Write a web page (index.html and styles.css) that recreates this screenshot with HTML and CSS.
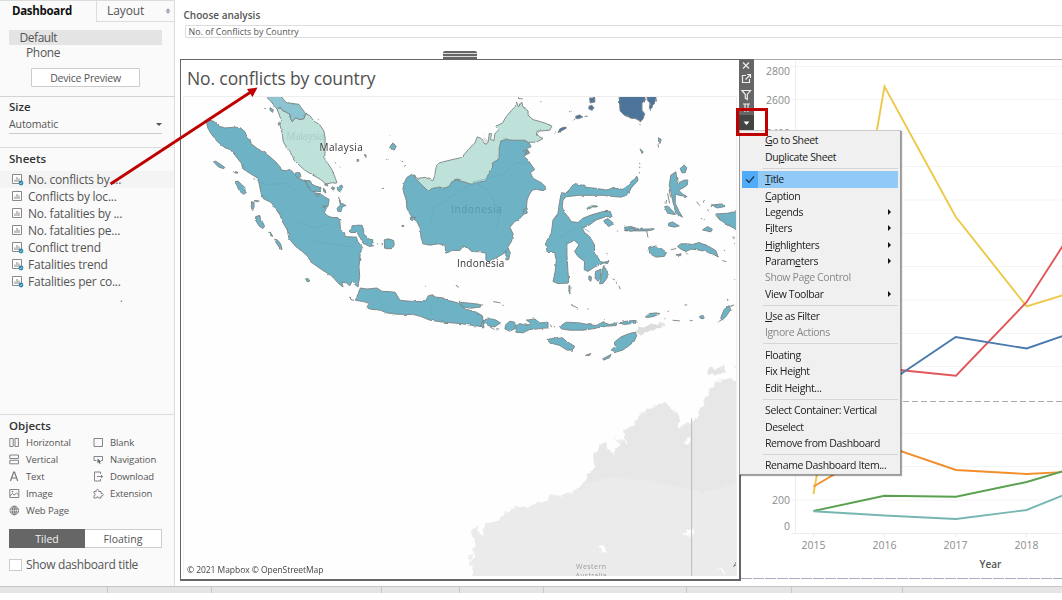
FILE: index.html
```html
<!DOCTYPE html>
<html lang="en">
<head>
<meta charset="utf-8">
<title>Dashboard</title>
<link rel="stylesheet" href="styles.css">
</head>
<body>
<svg class="defs" width="0" height="0">
  <symbol id="sheet" viewBox="0 0 12 12"><path d="M.5.5h9v9h-9z" fill="#fff" stroke="#888"/><path d="M3 8V5.500M5 8V3M7 8V4.500" stroke="#999" stroke-width="1.200"/></symbol>
  <symbol id="linked" viewBox="0 0 12 12"><use href="#sheet" width="12" height="12"/><circle cx="9" cy="9" r="2.400" fill="#2f87ad"/><path d="M7.800 9l.9.9 1.500-1.800" stroke="#d8eef7" stroke-width=".7" fill="none"/></symbol>
</svg>
<div class="app">
  <aside class="side">
    <div class="tabs"><div class="tab on">Dashboard</div><div class="tab lay">Layout<svg class="pin" width="4" height="6"><ellipse cx="2" cy="3" rx="1.200" ry="2" fill="#ccd" stroke="#778" stroke-width=".8"/></svg></div></div>
    <section class="device">
      <div class="default">Default</div>
      <div class="phone">Phone</div>
      <div class="preview">Device Preview</div>
    </section>
    <section class="size">
      <h3>Size</h3>
      <div class="select"><span>Automatic</span><i></i></div>
    </section>
    <section class="sheets">
      <h3>Sheets</h3>
      <ul>
        <li class="hot"><svg><use href="#linked"/></svg>No. conflicts by ...</li>
        <li><svg><use href="#sheet"/></svg>Conflicts by loc...</li>
        <li><svg><use href="#sheet"/></svg>No. fatalities by ...</li>
        <li><svg><use href="#sheet"/></svg>No. fatalities pe...</li>
        <li><svg><use href="#linked"/></svg>Conflict trend</li>
        <li><svg><use href="#linked"/></svg>Fatalities trend</li>
        <li><svg><use href="#linked"/></svg>Fatalities per co...</li>
      </ul>
      <div class="dot">.</div>
    </section>
    <section class="objects">
      <h3>Objects</h3>
      <div class="grid">
        <div><svg viewBox="0 0 11 11"><path d="M.8 1.500h3.400v8H.8zM6 1.500h3.400v8H6z"/></svg>Horizontal</div>
        <div><svg viewBox="0 0 11 11"><path d="M1 1.500h8.500v8H1z"/></svg>Blank</div>
        <div><svg viewBox="0 0 11 11"><path d="M.8 1h8.700v3.500H.8zM.8 6.300h8.700v3.500H.8z"/></svg>Vertical</div>
        <div><svg viewBox="0 0 11 11"><path d="M3.500 6.500H1v-4h8.500v4H8"/><path d="M4.500 4.500v5l1.300-1.200 1 2 .8-.5-.8-1.700 1.500-.4z" fill="#666" stroke="none"/></svg>Navigation</div>
        <div><svg viewBox="0 0 11 11"><path d="M1.500 10 4.700 1h.8L8.700 10M2.800 7h4.600" stroke-width="1.200"/></svg>Text</div>
        <div><svg viewBox="0 0 11 11"><path d="M7.500 3V1H1.500v9h6V8M4 5.500h5.500M8 4l1.800 1.500L8 7"/></svg>Download</div>
        <div><svg viewBox="0 0 11 11"><path d="M.8 1.500h9v8h-9zM1 8l2.300-2.500 1.700 1.500 2.500-2L9.700 7"/><circle cx="3.500" cy="3.700" r=".5"/></svg>Image</div>
        <div><svg viewBox="0 0 11 11"><path d="M1 3.500h2.300C2.300 1 6.300.5 5.700 3.500H8v2c3-.7 3 3 0 2.500V10H5.500c0-1.800-2-1.800-2 0H1V7.500c2 0 2-2 0-2z"/></svg>Extension</div>
        <div><svg viewBox="0 0 11 11"><circle cx="5.300" cy="5.500" r="4.300"/><ellipse cx="5.300" cy="5.500" rx="2" ry="4.300"/><path d="M5.300 1.200v8.600M1.300 4h8M1.300 7h8"/></svg>Web Page</div>
      </div>
      <div class="seg"><b>Tiled</b><span>Floating</span></div>
      <div class="check"><i></i>Show dashboard title</div>
    </section>
  </aside>
  <main class="canvas">
    <div class="param"><label>Choose analysis</label><div class="field">No. of Conflicts by Country</div></div>
    <div class="row">
      <div class="mapcard">
        <div class="handle"></div>
        <h1>No. conflicts by country</h1>
        <svg class="map" width="554" height="480" viewBox="183 97 554 480">
          <defs>
            <filter id="rough" filterUnits="userSpaceOnUse" x="183" y="90" width="560" height="490"><feTurbulence type="fractalNoise" baseFrequency=".22" numOctaves="1" seed="4"/><feDisplacementMap in="SourceGraphic" scale="2.600" xChannelSelector="R" yChannelSelector="G"/></filter>
            <filter id="rough2" filterUnits="userSpaceOnUse" x="183" y="90" width="560" height="490"><feTurbulence type="fractalNoise" baseFrequency=".2" numOctaves="2" seed="9"/><feDisplacementMap in="SourceGraphic" scale="7" xChannelSelector="R" yChannelSelector="G"/></filter>
          </defs>
          <rect x="183" y="97" width="554" height="480" fill="#fefefe"/>
          <g filter="url(#rough2)">
            <g transform="translate(440 350) scale(.33333)" fill="#ebebeb">
              <path d="M95 690L98 660 88 650 85 625 103 600 103 570 95 560 100 540 112 525 115 550 125 560 135 535 145 522 180 510 195 492 230 472 270 474 290 460 320 455 330 440 360 440 410 425 430 405 445 378 470 352 462 335 462 315 495 280 505 300 520 318 540 285 525 265 560 280 555 245 580 228 600 200 630 178 660 165 675 160 700 180 720 200 718 235 740 220 770 215 800 210 775 195 800 150 812 120 835 95 850 90 910 92 910 690z"/>
              <path d="M400 440L410 425 430 405 445 378 470 352 462 335 462 315 495 280 505 300 520 318 540 285 560 280 555 245 580 228 600 200 630 178 675 160 700 180 720 200 718 235 770 215 800 150 812 120 850 90 910 92 910 400 790 430 640 395 520 385 440 400z" fill="#e7e7e7"/>
              <path d="M805 66l10-16 15 8 25-8 8 12-20 14-38-2zM880 48l30 0 0 16z" fill="#e4e4e4"/>
              <path d="M740 265l12 0-2 22-12-2zM728 555l40-20-2 20-25 8zM480 592l16 0 2 14-10 8zM828 655l40 18-20-2zM88 645l12-40 6 20z" fill="#fff"/>
            </g>
            <path d="M637 330l11-4 18-2-8 5-10 3-8 4z" fill="#ddd" stroke="#ccc" stroke-width=".4"/>
            <path d="M481 137l3 3 2-5 2 7 2-7v6l-4 3z" fill="#ddd"/>
          </g>
          <path d="M692.500 419v158" stroke="#bbb"/>
          <g class="land" filter="url(#rough)">
            <g transform="translate(180 50) scale(.33333)">
              <path class="my" d="M290 178L298 170 305 180 318 186 328 192 330 205 335 214 345 202 358 208 370 205 375 190 388 196 400 212 418 224 430 242 434 262 433 330 442 340 455 360 465 385 470 400 455 398 436 402 420 388 395 374 372 360 340 330 336 318 320 295 308 275 305 250 298 225 300 205z"/>
              <path class="th" d="M245 130H300L305 143 318 157 355 162 362 172 375 190 370 205 358 208 345 202 335 214 330 205 328 192 318 186 305 180 298 170 290 178 280 165 268 150z"/>
              <path d="M76 210L82 208 100 214 115 228 133 233 160 231 178 232 192 244 198 258 208 268 210 280 230 295 250 306 268 320 285 335 298 350 303 360 318 362 325 358 333 362 343 374 355 385 372 392 378 402 388 418 402 428 420 432 432 440 446 448 444 462 436 478 432 488 440 497 452 502 472 503 478 510 480 540 492 548 494 560 528 562 532 575 546 592 540 610 536 650 538 680 533 712 525 706 515 696 508 708 498 700 484 698 488 712 475 702 462 688 450 675 430 664 410 650 390 636 382 620 365 605 345 590 325 566 320 540 305 515 298 495 285 477 272 458 248 446 240 425 232 385 208 370 186 356 182 340 165 318 148 298 133 293 110 275 90 250 80 232z"/>
              <path d="M98 335l6-2 14 9 14 10-4 4-16-6zM162 395l10-2 10 10 10 9 2 18-6 3-13-11-7-17zM225 500l10-3 10 18 7 15-6 6-11-8-11-18zM264 547l6 1 6 12-5-2zM282 568l8 2 10 12 4 18-6-4-12-18zM375 688l7-2 6 8-8 2zM212 455l8 2v13l-4 12-4-7zM220 452l14 0-4 4zM158 365l10 0 4 4-8 0zM218 386l5 2M250 174l6 0M268 172l10 6-2 8-8-6zM292 218l6 4-2 6zM412 208l4 1"/>
              <path d="M506 543L514 537 515 528 528 526 545 526 550 540 550 552 562 566 578 570 574 584 580 588 568 590 548 580 540 565 530 548 510 548zM612 570L625 567 640 572 642 585 636 596 622 597 613 595zM590 582l4 0M603 580l4 2v4"/>
              <path d="M345 368l13 0 3 12-11 4-6-8zM372 390l18 2 3 10 12 6 13 4 2 13-12-1-13 1-10-10zM405 432l14-2-8 12zM428 415l6 4 2 10-6-4zM470 412l14-7 3 9-9 11-6-4zM455 410l8 4-4 6-6-4zM432 402l8 0 2 6zM475 445l10 15 12 7-12 5-3 13-10-1-2-9 10-10zM425 468l12 0-8 6zM630 288l8-10 10 10-6 12-8-2zM530 328l5 0 0 5-5 0zM552 314l5 0 0 8-4-4zM605 415l6 0M618 328l3 0M665 330l4 4M674 348l3 1M627 253l3 2M463 337l4 2M478 350l2 2M665 526l6 2-4 4zM735 710l2 0M828 708l6 2-2 3z"/>
              <path d="M540 715L560 718 590 715 605 725 630 726 645 728 655 745 660 752 690 755 735 756 745 738 758 735 765 742 790 745 800 752 820 756 838 762 855 778 890 788 908 800 912 832 880 828 840 822 790 818 750 812 720 800 700 795 650 794 620 790 600 782 565 778 560 770 568 762 550 756 525 752 530 740zM508 742l6 6 6 4-8-2zM838 758l25 2 35 4 4 8-30 4-25-4z"/>
            </g>
            <g transform="translate(400 80) scale(.33333)">
              <path class="my" d="M36 282L52 295 75 292 98 302 103 290 108 262 118 248 150 240 185 232 205 208 225 188 232 170 245 175 258 193 265 185 268 160 275 160 272 178 282 182 285 160 298 148 288 138 308 128 320 108 335 90 345 80 350 65 356 80 366 65 370 80 385 92 385 105 400 118 425 125 440 130 457 138 450 150 412 153 410 165 430 175 410 186 390 186 340 220 280 330 80 345z"/>
              <path d="M36 282L48 297 65 315 82 331 98 325 115 321 135 324 148 318 155 305 170 300 190 305 215 313 240 306 258 302 262 290 270 272 278 262 278 248 292 240 298 232 298 205 303 182 320 178 340 180 375 180 388 188 394 200 380 205 390 218 372 228 385 240 395 255 405 268 392 278 400 295 425 308 442 325 430 332 410 328 398 330 388 345 382 360 380 385 375 400 358 418 345 425 330 442 340 462 335 485 325 500 322 515 300 528 268 545 258 540 258 520 240 516 215 515 205 505 190 498 180 512 160 512 137 520 135 496 115 492 90 496 68 492 62 470 60 445 50 425 38 415 28 400 20 385 18 360 8 330 12 308 20 292z"/>
              <path d="M318 512l7-7 7 15-6 20-8 0zM370 212l14-2-6 12zM30 412l16 0-6 10-8-2zM370 390l12-6 0 16-10 2zM5 240l4 2M12 258l4 0M7 436l5 1M355 54l14 2M422 64l3 0"/>
            </g>
            <g transform="translate(560 50) scale(.33333)">
              <path class="ph" d="M185 130H255L258 150 248 158 248 180 256 190 252 205 243 215 232 205 215 204 195 195 182 182 180 158zM262 130H295L290 155 280 165 275 182 270 172 272 158 264 150zM90 143l16 0 0 12-14 3zM88 168l8-3 8 5-6 10-10-4zM48 198l12-4 10 6-12 5-8 0zM0 236l18-8 2 6-15 8-10 6zM30 186l6-4M42 210l6-6M75 198l10 0M240 222l4 2M-15 250l4-4"/>
              <path d="M5 428L18 430 30 418 40 405 50 400 60 405 75 405 80 412 110 415 140 420 160 414 190 418 205 408 215 395 228 385 232 378 236 392 225 402 215 415 208 428 195 442 165 440 130 436 100 436 60 436 40 438 20 440 10 450 8 470 12 485 25 500 35 515 55 518 70 505 95 495 130 485 152 484 158 500 140 500 110 510 90 525 68 535 75 548 90 560 105 585 105 610 120 630 132 640 105 652 85 665 74 660 75 635 55 620 45 605 58 585 45 572 22 582 22 615 25 665 28 700-5 702-20 695-14 670-10 630-15 608-37 608-43 580-25 550-20 510-5 490 0 455z"/>
              <path d="M335 375L350 365 352 380 355 400 375 390 386 390 384 405 370 415 358 420 370 432 384 440 360 436 348 432 348 460 360 485 370 502 350 490 342 460 336 430 330 405zM363 355L375 345 383 352 378 368 368 368zM298 262l8 6-4 12-4-5zM296 282l2 10M242 296l10 9-4 5zM316 470l9-2 10 10 10 10 3 6-23-4zM328 520l12-4 20 12-15 4-17-4zM430 540l15-10 15 8-5 8zM545 482L505 490 470 492 485 510 500 522 545 545zM455 465l35-3 6 8-21 4zM195 532l20-2 25 8 45-1-5 3-18 3-32 0-32-1zM262 543l4 20M133 512l12-6 17 14-12 10-10-5zM82 475l12-7 14-1 4 4-12 0-16 8zM325 430l6 30M330 422l4 20M322 450l-2 12M240 338l2 4M241 350l0 4M240 366l1 4M412 455l10 12M435 450l2 8M425 509l12 0M525 560l0 8M172 542l3 3M445 478l4 6M470 496l16 18"/>
            </g>
            <g transform="translate(480 230) scale(.33333)">
              <path d="M348 125l17-7-3 27-7 10-8-10zM372 108l12 17-1 20-13 17-10 0 5-22zM370 98l18-4-4 8zM328 138l8 4-2 13-6-5zM268 168l3 0 0 25-3-4zM400 148l6 2M410 156l4 6M418 168l5 10M380 70l4 2"/>
              <path d="M508 55L530 48 545 55 562 68 555 80 530 82 512 72zM595 50L605 42 625 42 640 44 660 38 685 48 710 62 718 82 700 72 680 65 655 60 635 58 620 65 605 58zM590 75l16-3-2 6zM575 60l16-4M620 68l6 6M435 2l20-8 20 4-18 6zM730 92l12 4M735 60l2 4M767 40l0 3M767 148l0 2"/>
              <path d="M-10 252l15 5 4 14-8 20M10 270L30 268 45 270 62 280 45 292 30 290 12 280zM78 285L90 275 105 278 105 298 90 305 75 298zM108 290L120 282 140 288 155 282 140 272 165 268 180 280 205 278 205 295 175 298 150 300 130 310 108 308zM240 290L260 278 300 280 325 285 350 288 370 278 390 285 415 280 410 288 380 290 340 298 310 302 270 302 245 298zM420 280L440 275 470 272 470 280 435 285zM202 330L245 322 260 335 285 350 280 362 262 362 240 348 210 340zM370 388L395 375 390 385 372 392zM318 378l16-6-4 6zM395 362L408 350 405 338 425 322 450 312 468 308 472 318 465 335 450 348 430 362 410 368zM498 262L510 252 530 250 542 252 525 260 505 264zM725 265L735 240 750 228 755 240 740 262 728 272zM752 232l14-6M716 278l10-6M745 208l2 6M580 272l22 2M632 273l6 1M660 262l8-4 8 6-4 4zM616 226l8 0M565 246l4-2M556 267l3 1M275 224l20 12M323 238l4 0M40 216l14 2 8 2M68 226l4 2M0 225l10 2M212 285l4 8M222 290l6 5M30 292l14 8M50 298l8 0M378 268l-6 10"/>
            </g>
          </g>
          <path class="prov" d="M256 180l10 5 18-2 12 8M298 222l16 6 14-4M312 241l22 4 18 2M430 226l4-18 40-26 14 8 12 22-4 18M474 182l30-8 12-12 12 2M560 238l20-12 10 6M380 300l2 10M430 306l2 10"/>
          <g class="ghost"><text x="286" y="139.500" textLength="38" fill="#a6cfc5">Malaysia</text><text x="451" y="213.500" textLength="51" fill="#4f9bad">Indonesia</text></g>
          <g class="names"><text x="319" y="150.500" textLength="43.500">Malaysia</text><text x="457" y="267" textLength="47.500">Indonesia</text></g>
          <g class="west"><text x="576.500" y="570.500" textLength="30">Western</text><text x="576" y="579" textLength="31">Australia</text><text x="734.500" y="568" font-style="italic" fill="#555">A</text></g>
        </svg>
        <div class="credit">© 2021 Mapbox © OpenStreetMap</div>
        <div class="tools">
          <svg width="15" height="71" viewBox="0 0 15 71" fill="none" stroke="#eee" stroke-width="1.200"><path d="M4 3.500l6 6M10 3.500l-6 6M7 16.500H3.500v7h7V20M6.500 20.500l4.500-4.500M8 15.500h3.500V19M3 31.500h8.500L8.300 35.500v5l-2-1.300v-3.700zM4 45h7M6 45v8M9 45v8"/><path d="M0 56h15v15H0z" fill="#444" stroke="none"/><path d="M4.500 62.500h6L7.500 66z" fill="#fff" stroke="none"/></svg>
        </div>
      </div>
      <svg class="chart" width="321" height="522" viewBox="741 59 321 522">
        <path d="M741 59.500h321" stroke="#aaa"/>
        <path d="M792 66.500h270M792 99.500h270M792 133.500h270M792 166.500h270M792 200h270M792 233.500h270M792 266.500h270M792 300h270M792 333.500h270M792 366.500h270M792 433.500h270M792 466.500h270M792 500h270" stroke="#f4f4f4"/>
        <path d="M795.500 61v472M792 533.500h270M813.500 533v4M884.500 533v4M955.500 533v4M1026.500 533v4" stroke="#ededed"/>
        <path d="M741 401.500h321" stroke="#aaa" stroke-width="1.200" stroke-dasharray="6 3"/>
        <path d="M741 578.500h321" stroke="#a6adbf" stroke-dasharray="11 1"/>
        <g fill="none" stroke-width="1.900">
          <path stroke="#edc948" d="M813.500 494L884.500 86.500 955.500 216.500 1026.700 306.500 1064 295"/>
          <path stroke="#e15759" d="M884.500 368.500L956 375.700 1026.700 302 1064 244"/>
          <path stroke="#4a7aac" d="M884.500 385L955.700 337 1026.700 348.500 1064 335.500"/>
          <path stroke="#f28e2b" d="M813.500 486.500L835 474 884.500 445.500 956 470 1026.700 474 1064 472"/>
          <path stroke="#59a14f" d="M813.500 511L884.500 495.700 956 496.800 1026.700 482 1064 471"/>
          <path stroke="#76b7b2" d="M813.500 511.300L884.500 515.500 956 519 1026.700 510 1064 495"/>
        </g>
        <g class="ax"><text x="790" y="74.500">2800</text><text x="790" y="103.500">2600</text><text x="790" y="137">2400</text><text x="790" y="504">200</text><text x="790" y="530">0</text></g>
        <g class="ax mid"><text x="813.500" y="549">2015</text><text x="884.500" y="549">2016</text><text x="955.500" y="549">2017</text><text x="1026.500" y="549">2018</text></g>
        <text class="year" x="990.500" y="568">Year</text>
      </svg>
    </div>
  </main>
</div>
<footer class="status"><i class="s1"></i><i class="s2"></i><i class="s3"></i><i class="s4"></i><i class="s5"></i><i class="s6"></i><i class="s7"></i><i class="s8"></i></footer>
<div class="menu">
  <p><u>G</u>o to Sheet</p>
  <p>Du<u>p</u>licate Sheet</p>
  <hr>
  <p class="sel"><svg class="tick" width="16" height="16"><path d="M4 8.500l3 2.800L12 5.500" fill="none" stroke="#234" stroke-width="1.300"/></svg><u>T</u>itle</p>
  <p><u>C</u>aption</p>
  <p class="sub">Legends</p>
  <p class="sub">F<u>i</u>lters</p>
  <p class="sub"><u>H</u>ighlighters</p>
  <p class="sub">Param<u>e</u>ters</p>
  <p class="off">Show Pa<u>g</u>e Control</p>
  <p class="sub">View Toolbar</p>
  <hr>
  <p><u>U</u>se as Filter</p>
  <p class="off">Ignore Actions</p>
  <hr>
  <p>Floating</p>
  <p>Fix Height</p>
  <p>Edit Height...</p>
  <hr>
  <p>Select Container: Vertical</p>
  <p>Deselect</p>
  <p>Remove from Dashboard</p>
  <hr>
  <p>Rename Dashboard Item...</p>
</div>
<svg class="notes" width="1062" height="600">
  <path d="M110.500 184L250 92.500" stroke="#c00000" stroke-width="2.800"/>
  <path d="M257.500 87.500L252.500 97 247 89z" fill="#c00000"/>
  <path d="M737.500 109.500h29v25h-29z" fill="none" stroke="#c00000" stroke-width="3"/>
</svg>
</body>
</html>
```

FILE: styles.css
```css
* { box-sizing: border-box; }
body { margin: 0; width: 1062px; height: 600px; overflow: hidden; position: relative; background: #fff; font-family: "Open Sans", "Noto Sans", sans-serif; color: #555; }
.defs { position: absolute; }
h1, h3, p, ul { margin: 0; padding: 0; }
.app { display: flex; height: 586px; }

.side { width: 175px; height: 586px; background: #fafafa; border-right: 1px solid #ddd; display: flex; flex-direction: column; }
.tabs { display: flex; height: 22px; border-top: 1px solid #ddd; font-size: 12px; line-height: 20px; }
.tab.on { width: 96px; padding-left: 12px; font-weight: 700; color: #111; font-size: 11.500px; letter-spacing: -.3px; }
.tab.lay { flex: 1; padding: 0 4px 0 10px; border-left: 1px solid #ddd; border-bottom: 1px solid #ddd; display: flex; align-items: center; justify-content: space-between; letter-spacing: -.1px; }
.device { height: 75px; padding: 8px 12px 0 9px; border-bottom: 1px solid #d4d4d4; font-size: 12px; }
.default { height: 15px; line-height: 15px; background: #e4e4e4; padding-left: 10.500px; letter-spacing: -.45px; }
.phone { height: 15px; line-height: 15px; padding-left: 17px; letter-spacing: -.35px; }
.preview { width: 109px; height: 19px; margin: 8px 0 0 22px; border: 1px solid #ccc; border-radius: 1px; background: #fff; text-align: center; font-size: 10.500px; line-height: 18px; letter-spacing: -.2px; }
h3 { font-size: 11.500px; line-height: 17px; color: #333; font-weight: 600; letter-spacing: 0; }
.size { height: 51px; padding: 1px 12px 0 9px; border-bottom: 1px solid #ddd; }
.select { display: flex; justify-content: space-between; align-items: center; height: 19px; border-bottom: 1px solid #ccc; font-size: 10.500px; letter-spacing: -.1px; }
.select i { border: 3px solid transparent; border-top-color: #555; border-bottom: 0; }
.sheets { height: 267px; padding-top: 2px; border-bottom: 1px solid #ddd; }
.sheets h3 { padding-left: 9px; }
ul { list-style: none; padding-top: 4px; }
li { display: flex; align-items: center; gap: 4px; height: 17px; padding-left: 12px; font-size: 12px; letter-spacing: -.23px; white-space: pre; }
li svg { width: 12px; height: 12px; }
.hot { background: #f4f4f4; }
.dot { margin-left: 120px; font-size: 10px; line-height: 16px; }
.objects { padding: 2px 12px 0 9px; }
.grid { display: grid; grid-template-columns: 84px 1fr; grid-auto-rows: 17px; font-size: 9.500px; }
.grid div { display: flex; align-items: center; gap: 6px; white-space: nowrap; letter-spacing: -.12px; }
.grid svg { width: 11px; height: 11px; flex: none; fill: none; stroke: #777; stroke-width: .9; }
.seg { display: flex; width: 153px; height: 19px; margin-top: 10px; font-size: 10.500px; line-height: 18px; text-align: center; border: 1px solid #ccc; background: #fff; }
.seg b { width: 76px; margin: -1px 0 -1px -1px; line-height: 20px; background: #666; color: #f4f4f4; font-weight: 400; }
.seg span { flex: 1; }
.check { display: flex; align-items: center; gap: 4px; margin-top: 9px; font-size: 12px; line-height: 15px; letter-spacing: -.33px; white-space: nowrap; }
.check i { width: 13px; height: 12px; border: 1px solid #ccc; background: #fff; }

.canvas { width: 887px; padding: 9px 0 0 5px; overflow: hidden; }
.param { height: 50px; padding-left: 3.500px; }
.param label { display: block; font-size: 10px; line-height: 13px; font-weight: 600; letter-spacing: 0; }
.field { margin: 3px 0 0 1px; height: 13px; border: 1px solid #ddd; border-right: 0; border-radius: 2px 0 0 2px; padding-left: 3px; font-size: 8.900px; line-height: 11px; color: #555; }
.row { display: flex; }
.mapcard { position: relative; flex: none; width: 561px; height: 522px; border: 2px solid #666; border-left-width: 1px; border-top-width: 1px; padding: 0 1px 0 2px; background: #fff; }
.handle { position: absolute; left: 262px; top: -9px; width: 34px; height: 8px; border-radius: 2px 2px 0 0; background: linear-gradient(#666 2px, #ddd 2px 3px, #666 3px 5px, #ddd 5px 6px, #666 6px); }
.mapcard h1 { height: 36px; padding-left: 4px; font-size: 17.500px; line-height: 36px; font-weight: 400; letter-spacing: -.12px; color: #505050; }
.map { display: block; border-top: 1px solid #eee; border-left: 1px solid #f2f2f2; border-right: 1px solid #eee; }
.land path { fill: #6db3c5; stroke: #7d8485; stroke-width: 2.800; stroke-linejoin: round; }
.land .my { fill: #bee2da; }
.land .th { fill: #8cc5d1; }
.land .ph { fill: #4e749b; }
.prov { fill: none; stroke: #62a7b9; stroke-width: .6; }
.ghost { font-size: 10px; }
.names { font-size: 10px; fill: #333; paint-order: stroke; stroke: rgba(255,255,255,.35); stroke-width: 1px; }
.west { font-size: 7px; fill: #999; }
.credit { position: absolute; left: 6px; bottom: 3px; font-size: 8.500px; line-height: 12px; letter-spacing: -.05px; color: #444; }
.tools { position: absolute; left: 558px; top: -1px; width: 15px; height: 71px; background: #666; z-index: 2; }
.tools svg { display: block; }
.chart { display: block; flex: none; }
.ax { font-size: 10.500px; fill: #8c8c8c; text-anchor: end; }
.ax.mid { text-anchor: middle; }
.year { font-size: 10px; font-weight: 600; fill: #555; text-anchor: middle; }

.status { display: flex; height: 7px; background: #e5e5e5; border-top: 1px solid #c4c4c4; }
.status i { height: 6px; border-right: 1px solid #c8c8c8; }
.s1 { width: 108px; } .s2 { width: 104px; } .s3 { width: 170px; } .s4 { width: 78px; }
.s5 { width: 84px; } .s6 { width: 143px; } .s7 { width: 105px; } .s8 { width: 111px; }

.menu { position: absolute; left: 739px; top: 130px; width: 162px; height: 345px; padding: 1.300px 2px 0; background: #f0f0f0; border: 1px solid #ccc; border-left-color: #999; border-right-color: #999; border-bottom-color: #999; box-shadow: 1px 1px 1px rgba(0,0,0,.35); color: #1c1c1c; font-size: 10.500px; }
.menu p { position: relative; height: 16.350px; line-height: 16px; padding-left: 23px; letter-spacing: -.38px; white-space: nowrap; }
.menu hr { height: 1px; margin: 2.600px 0 2.600px 21px; border: 0; background: #d5d5d5; }
.menu u { text-underline-offset: 1px; }
.menu .off { color: #888; }
.menu .sel { background: linear-gradient(90deg, #50abf8 16px, #91c9f7 16px); }
.tick { position: absolute; left: 0; top: 0; }
.sub::after { content: ""; position: absolute; right: 7px; top: 5px; border: 3px solid transparent; border-left-color: #111; border-right: 0; }
.notes { position: absolute; left: 0; top: 0; z-index: 5; fill: none; }
```
